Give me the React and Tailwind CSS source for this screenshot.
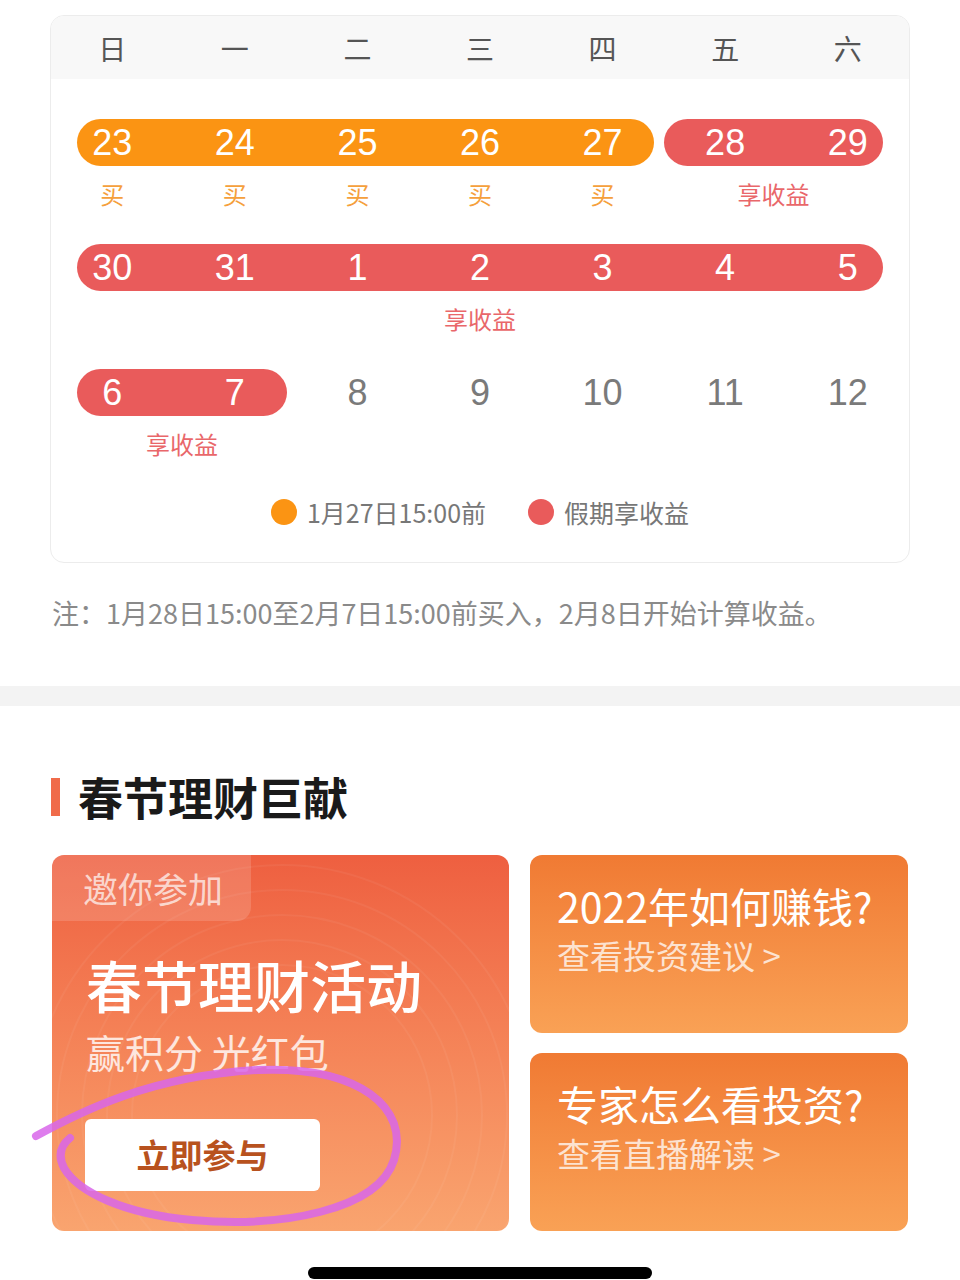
const font = "font-['Noto_Sans_CJK_SC','Noto_Sans',sans-serif]";
const numFont = "font-['Liberation_Sans','Noto_Sans_CJK_SC',sans-serif]";

const weekdays = ["日", "一", "二", "三", "四", "五", "六"];

function Num({ col, children, gray }) {
  return (
    <div
      className={`row-start-1 ${col} flex items-center justify-center text-[36px] leading-none z-10 ${numFont} ${
        gray ? "text-[#7a7a7a]" : "text-white"
      }`}
    >
      {children}
    </div>
  );
}

const cols = [
  "col-start-1",
  "col-start-2",
  "col-start-3",
  "col-start-4",
  "col-start-5",
  "col-start-6",
  "col-start-7",
];

function Calendar() {
  return (
    <div className="ml-[50px] mr-[50px] mt-[15px] rounded-[14px] border border-[#ececec] bg-white overflow-hidden">
      <div className="grid grid-cols-7 h-[63px] bg-[#f8f8f8] items-center">
        {weekdays.map((d) => (
          <div key={d} className="text-center text-[28px] text-[#555]">
            {d}
          </div>
        ))}
      </div>

      {/* row 1 */}
      <div className="mt-[40px] grid grid-cols-7 grid-rows-[47px]">
        <div className="row-start-1 col-start-1 col-end-6 ml-[26px] mr-[10px] rounded-full bg-[#fb9413]" />
        <div className="row-start-1 col-start-6 col-end-8 mr-[26px] rounded-full bg-[#e95b5b]" />
        {["23", "24", "25", "26", "27", "28", "29"].map((n, i) => (
          <Num key={n} col={cols[i]}>
            {n}
          </Num>
        ))}
      </div>
      <div className="grid grid-cols-7 mt-[14px] h-[28px] text-[24px] leading-[28px]">
        {[0, 1, 2, 3, 4].map((i) => (
          <div key={i} className="text-center text-[#f5a03c]">
            买
          </div>
        ))}
        <div className="col-start-6 col-end-8 mr-[26px] text-center text-[#e9676a]">享收益</div>
      </div>

      {/* row 2 */}
      <div className="mt-[36px] grid grid-cols-7 grid-rows-[47px]">
        <div className="row-start-1 col-start-1 col-end-8 mx-[26px] rounded-full bg-[#e95b5b]" />
        {["30", "31", "1", "2", "3", "4", "5"].map((n, i) => (
          <Num key={n} col={cols[i]}>
            {n}
          </Num>
        ))}
      </div>
      <div className="grid grid-cols-7 mt-[14px] h-[28px] text-[24px] leading-[28px]">
        <div className="col-start-1 col-end-8 text-center text-[#e9676a]">享收益</div>
      </div>

      {/* row 3 */}
      <div className="mt-[36px] grid grid-cols-7 grid-rows-[47px]">
        <div className="row-start-1 col-start-1 col-end-3 ml-[26px] mr-[9px] rounded-full bg-[#e95b5b]" />
        {["6", "7", "8", "9", "10", "11", "12"].map((n, i) => (
          <Num key={n} col={cols[i]} gray={i > 1}>
            {n}
          </Num>
        ))}
      </div>
      <div className="grid grid-cols-7 mt-[14px] h-[28px] text-[24px] leading-[28px]">
        <div className="col-start-1 col-end-3 ml-[26px] mr-[9px] text-center text-[#e9676a]">享收益</div>
      </div>

      {/* legend */}
      <div className="mt-[38px] mb-[34px] flex items-center justify-center gap-[42px] text-[25px] text-[#777] leading-[32px]">
        <div className="flex items-center gap-[10px]">
          <span className="w-[26px] h-[26px] rounded-full bg-[#fb9413]" />
          <span>1月27日15:00前</span>
        </div>
        <div className="flex items-center gap-[10px]">
          <span className="w-[26px] h-[26px] rounded-full bg-[#e95b5b]" />
          <span>假期享收益</span>
        </div>
      </div>
    </div>
  );
}

function SmallCard({ title, sub }) {
  return (
    <div className="flex-1 rounded-[12px] bg-gradient-to-b from-[#f07a33] to-[#f9a155] pl-[27px] pt-[26px]">
      <div className="text-[41px] leading-[48px] text-white">{title}</div>
      <div className="mt-[6px] text-[33px] leading-[40px] text-white/75">{sub}</div>
    </div>
  );
}

export default function App() {
  return (
    <div className={`relative w-[960px] h-[1280px] bg-white overflow-hidden ${font}`}>
      <Calendar />

      <div className="mt-[32px] ml-[52px] text-[27px] leading-[36px] text-[#8a8a8a] whitespace-nowrap">
        注：1月28日15:00至2月7日15:00前买入，2月8日开始计算收益。
      </div>

      <div className="mt-[55px] h-[20px] bg-[#f3f3f3]" />

      <div className="mt-[65px] ml-[51px] flex items-center gap-[18px]">
        <span className="w-[9px] h-[38px] bg-[#f06b4a]" />
        <span className="text-[45px] leading-[52px] font-bold text-[#1a1a1a]">春节理财巨献</span>
      </div>

      <div className="mt-[32px] mx-[52px] flex gap-[21px] h-[376px]">
        <div className="relative w-[457px] rounded-[12px] overflow-hidden bg-gradient-to-b from-[#ee5f40] to-[#f9a46f]">
          <svg className="absolute inset-0" width="457" height="376" viewBox="0 0 457 376">
            {[150, 175, 200, 225, 250].map((r) => (
              <circle key={r} cx="230" cy="260" r={r} fill="none" stroke="white" strokeOpacity="0.05" strokeWidth="2" />
            ))}
          </svg>
          <div className="relative inline-block bg-white/15 rounded-br-[14px] pl-[31px] pr-[28px] h-[66px] leading-[66px] text-[35px] text-white/70">
            邀你参加
          </div>
          <div className="relative ml-[34px] mt-[30px] text-[56px] leading-[66px] font-medium text-white whitespace-nowrap">
            春节理财活动
          </div>
          <div className="relative ml-[34px] mt-[11px] text-[39px] leading-[46px] text-white/80 whitespace-nowrap">
            赢积分 光红包
          </div>
          <div className="relative ml-[33px] mt-[45px] w-[235px] h-[72px] rounded-[6px] bg-white flex items-center justify-center text-[33px] font-bold text-[#b8521e]">
            立即参与
          </div>
        </div>

        <div className="flex-1 flex flex-col gap-[20px]">
          <SmallCard title="2022年如何赚钱?" sub="查看投资建议 >" />
          <SmallCard title="专家怎么看投资?" sub="查看直播解读 >" />
        </div>
      </div>

      <div className="mt-[36px] mx-auto w-[344px] h-[12px] rounded-full bg-black" />

      {/* hand-drawn annotation */}
      <svg className="absolute left-0 top-0 pointer-events-none" width="960" height="1280" viewBox="0 0 960 1280">
        <path
          d="M 36 1136 C 80 1112 150 1076 258 1070 C 360 1066 410 1108 394 1160 C 378 1210 282 1228 192 1220 C 124 1214 78 1192 64 1168 C 58 1156 60 1146 70 1138"
          fill="none"
          stroke="#d866ea"
          strokeOpacity="0.85"
          strokeWidth="8"
          strokeLinecap="round"
        />
      </svg>
    </div>
  );
}
